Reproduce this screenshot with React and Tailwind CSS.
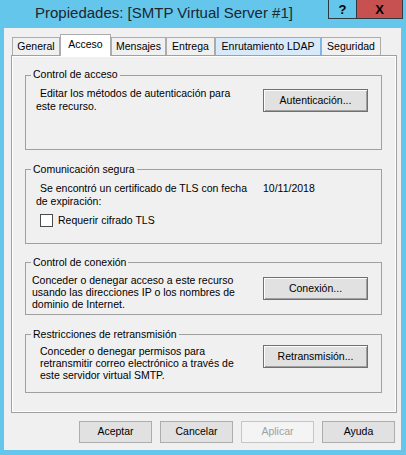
export default function App() {
  const tabs = [
    { label: 'General', w: 'w-[48px]' },
    { label: 'Acceso', w: 'w-[51px]', active: true },
    { label: 'Mensajes', w: 'w-[55px]' },
    { label: 'Entrega', w: 'w-[49px]' },
    { label: 'Enrutamiento LDAP', w: 'w-[106px]', hover: true },
    { label: 'Seguridad', w: 'w-[60px]' },
  ];

  const btn =
    'w-[105px] h-[23px] shrink-0 flex items-center justify-center border border-[#707070] bg-[#e1e1e1] shadow-[inset_1px_1px_0_#fdfdfd,inset_-1px_-1px_0_#a0a0a0] text-black';
  const footBtn =
    'w-[73px] h-[22px] flex items-center justify-center border border-[#adadad] bg-[#e1e1e1] text-black';

  return (
    <div className="w-[406px] h-[455px] bg-[#64c6ea] flex flex-col font-['Liberation_Sans',Arial,sans-serif] text-[10.5px] text-black select-none">
      {/* Title bar */}
      <div className="h-[28px] flex items-start shrink-0">
        <div className="flex-1 h-[25px] flex items-center justify-center text-[15px] text-[#1b2731] pt-[1px]">
          Propiedades: [SMTP Virtual Server #1]
        </div>
        <div className="flex mr-[3px]">
          <div className="w-[29px] h-[19px] border border-t-0 border-[#2d3a40] flex items-center justify-center text-[13px] font-bold leading-none">
            ?
          </div>
          <div className="w-[46px] h-[19px] border border-t-0 border-l-0 border-[#2d3a40] bg-[#c75050] flex items-center justify-center text-[13px] font-bold leading-none">
            X
          </div>
        </div>
      </div>

      {/* Client area */}
      <div className="ml-[4px] mr-[5px] h-[422px] bg-[#f0f0f0] flex flex-col shrink-0">
        {/* Tabs */}
        <div className="mt-[6px] pl-[8px] h-[21px] flex items-end">
          {tabs.map(t =>
            t.active ? (
              <div
                key={t.label}
                className={`${t.w} h-[22px] -mb-px relative z-10 bg-white border border-b-0 border-[#acacac] flex items-start justify-center pt-[2px]`}
              >
                {t.label}
              </div>
            ) : (
              <div
                key={t.label}
                className={`${t.w} h-[18px] border border-b-0 flex items-center justify-center ${
                  t.hover ? 'bg-[#d8eaf9] border-[#7eb4ea]' : 'bg-[#f0f0f0] border-[#acacac]'
                }`}
              >
                {t.label}
              </div>
            )
          )}
        </div>

        {/* Panel */}
        <div className="ml-[7px] w-[386px] h-[358px] border border-[#a0a0a0] shadow-[inset_1px_1px_0_#fff,inset_-1px_-1px_0_#fff] pl-[13px] flex flex-col">
          {/* Control de acceso */}
          <div className="relative mt-[19px] w-[357px] h-[75px] border border-[#a0a0a0] flex items-start shrink-0">
            <span className="absolute -top-[8px] left-[5px] px-[2px] bg-[#f0f0f0] leading-[13px]">Control de acceso</span>
            <div className="flex-1 pt-[11px] pl-[10px] leading-[13px]">
              <div className="pl-[4px]">Editar los métodos de autenticación para</div>
              <div>este recurso.</div>
            </div>
            <div className={`${btn} mt-[13px] mr-[13px]`}>Autenticación...</div>
          </div>

          {/* Comunicación segura */}
          <div className="relative mt-[19px] w-[357px] h-[75px] border border-[#a0a0a0] shrink-0">
            <span className="absolute -top-[7px] left-[5px] px-[2px] bg-[#f0f0f0] leading-[13px]">Comunicación segura</span>
            <div className="pt-[12px] pl-[10px] leading-[13px]">
              <div className="flex">
                <span className="pl-[4px] w-[227px]">Se encontró un certificado de TLS con fecha</span>
                <span>10/11/2018</span>
              </div>
              <div>de expiración:</div>
            </div>
            <div className="flex items-center mt-[6px] pl-[14px]">
              <span className="w-[13px] h-[13px] border border-[#4b4b4b] bg-white shrink-0" />
              <span className="ml-[5px] leading-[13px]">Requerir cifrado TLS</span>
            </div>
          </div>

          {/* Control de conexión */}
          <div className="relative mt-[18px] w-[357px] h-[53px] border border-[#a0a0a0] flex items-start shrink-0">
            <span className="absolute -top-[7px] left-[5px] px-[2px] bg-[#f0f0f0] leading-[13px]">Control de conexión</span>
            <div className="flex-1 pt-[10.5px] pl-[6px] leading-[12.3px]">
              <div>Conceder o denegar acceso a este recurso</div>
              <div>usando las direcciones IP o los nombres de</div>
              <div>dominio de Internet.</div>
            </div>
            <div className={`${btn} mt-[14px] mr-[13px]`}>Conexión...</div>
          </div>

          {/* Restricciones de retransmisión */}
          <div className="relative mt-[19px] w-[357px] h-[59px] border border-[#a0a0a0] flex items-start shrink-0">
            <span className="absolute -top-[7px] left-[5px] px-[2px] bg-[#f0f0f0] leading-[13px]">Restricciones de retransmisión</span>
            <div className="flex-1 pt-[10px] pl-[14px] leading-[12px]">
              <div>Conceder o denegar permisos para</div>
              <div>retransmitir correo electrónico a través de</div>
              <div>este servidor virtual SMTP.</div>
            </div>
            <div className={`${btn} mt-[10px] mr-[13px]`}>Retransmisión...</div>
          </div>
        </div>

        {/* Footer buttons */}
        <div className="mt-[8px] mr-[6px] flex justify-end gap-[8px]">
          <div className={footBtn}>Aceptar</div>
          <div className={footBtn}>Cancelar</div>
          <div className="w-[73px] h-[22px] flex items-center justify-center border border-[#c5c5c5] bg-[#f4f4f4] text-[#a0a0a0]">
            Aplicar
          </div>
          <div className={footBtn}>Ayuda</div>
        </div>
      </div>
    </div>
  );
}
